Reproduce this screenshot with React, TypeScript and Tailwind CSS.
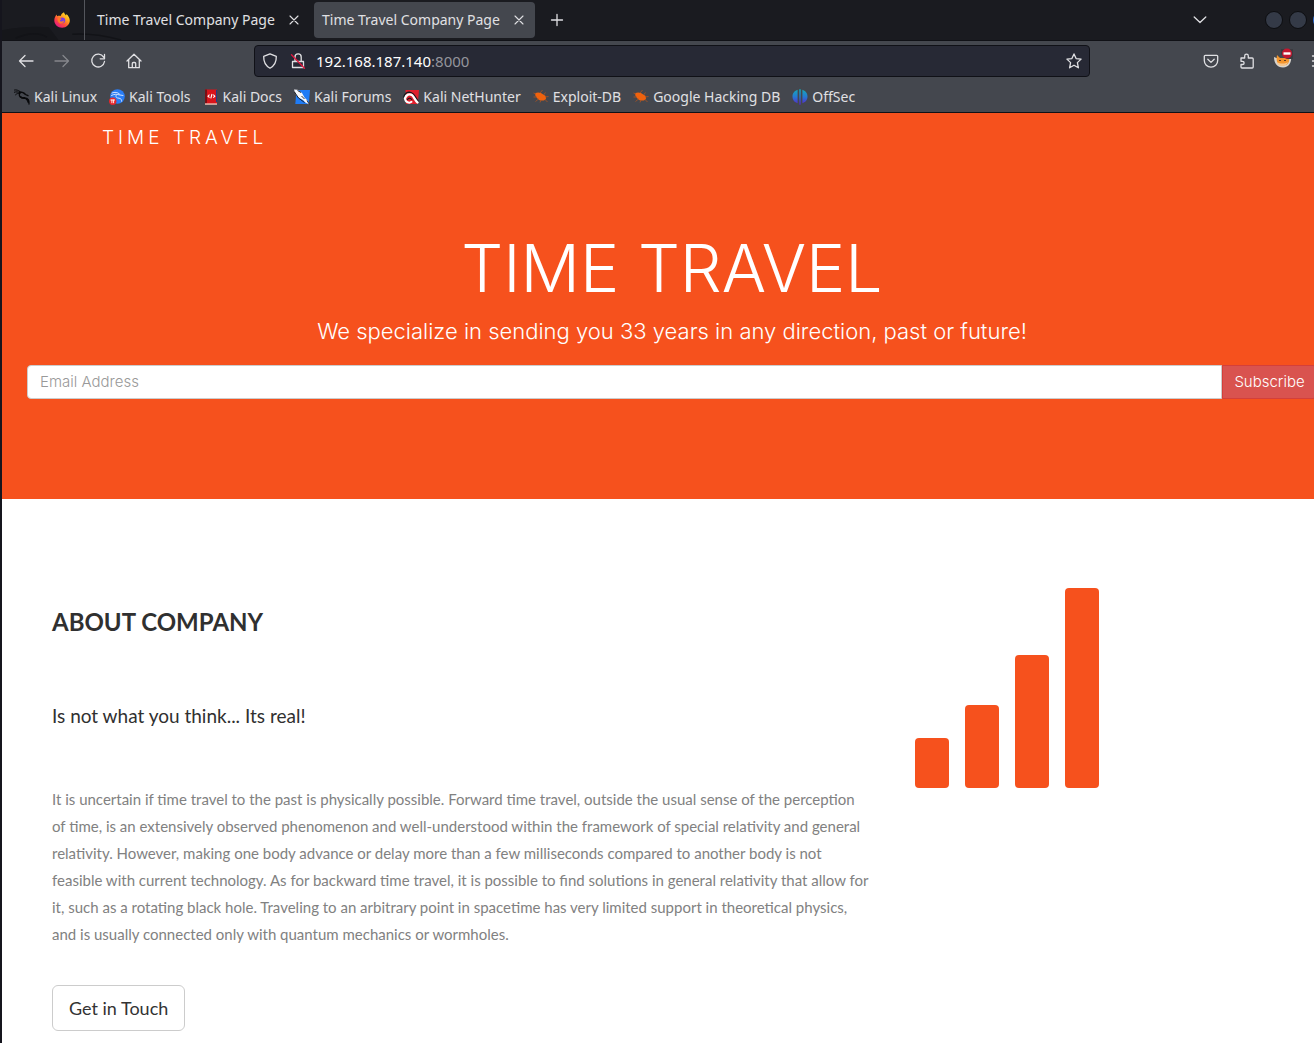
import type { ReactNode } from 'react';

const ui = "font-['Noto_Sans',sans-serif]";
const display = "font-[Inter,sans-serif]";

function Svg({ children, size = 'size-4', label }: { children: ReactNode; size?: string; label?: string }) {
  return (
    <svg
      viewBox="0 0 16 16"
      className={`${size} shrink-0`}
      fill="none"
      stroke="currentColor"
      strokeWidth="1.3"
      strokeLinecap="round"
      strokeLinejoin="round"
      role={label ? 'img' : undefined}
      aria-label={label}
      aria-hidden={label ? undefined : true}
    >
      {children}
    </svg>
  );
}

function CloseIcon() {
  return (
    <Svg>
      <path d="M4 4l8 8M12 4l-8 8" strokeWidth="1.1" />
    </Svg>
  );
}

function FirefoxLogo() {
  return (
    <svg viewBox="0 0 16 16" className="size-4 shrink-0" aria-hidden="true">
      <defs>
        <linearGradient id="fx" x1="0.85" y1="0.1" x2="0.2" y2="0.95">
          <stop offset="0" stopColor="#ffe226" />
          <stop offset="0.35" stopColor="#ff9a1f" />
          <stop offset="0.65" stopColor="#ff4a3d" />
          <stop offset="1" stopColor="#e31587" />
        </linearGradient>
      </defs>
      <path
        d="M10 0.3c0.3 1.6 1.3 2.3 2 3.2 0.3-0.5 0.4-1 0.3-1.5 2 1.6 3.5 3.9 3.5 6.6 0 4-3.4 7.2-7.7 7.2S0.3 12.700 0.3 8.600c0-2.500 0.900-4.500 2.400-6.100 0 0.900 0.200 1.400 0.600 1.700 1.300-0.700 2.300-0.500 3.400-0.200C7.100 2.300 8.300 1 10 0.300z"
        fill="url(#fx)"
      />
      <circle cx="8.300" cy="8.300" r="2.900" fill="#7a3fe0" />
      <path d="M3.600 6.300c1.600-0.600 2.600 0.200 4 0.500-0.100 1-1.700 1-1.700 1.900 0.800 1.500 3 0.900 4.400-0.100-0.400 2.500-2.700 3.500-4.400 2.800C4.200 10.700 3.200 8.600 3.600 6.300z" fill="#ff7a28" />
    </svg>
  );
}

function KaliDragon() {
  return (
    <svg viewBox="0 0 16 16" className="size-4 shrink-0" fill="none" stroke="#08090b" strokeLinecap="round" aria-hidden="true">
      <path d="M0.500 1C2.500 0.600 4 1.200 6 2.500M0.300 3.200C2 2.600 4 2.800 6 3.700M1.500 5.800C2.500 4.600 4 4.200 6 4.500" strokeWidth="1" />
      <path d="M5.500 3c2 0 4.500 0.600 6 2.500l2.500 1.200M5.800 4C4.800 5.800 5.200 8.200 8 8.800c2.500 0.400 5-0.200 6.300 1.800 0.900 1.500 0.800 3 0.700 4.400" strokeWidth="1.300" />
      <path d="M6.500 7.800c1 1.300 2.500 1.200 4 1.200M12.500 10c1 0.700 1.600 1.800 1.800 3" strokeWidth="1.800" />
    </svg>
  );
}

function ToolsIcon() {
  return (
    <svg viewBox="0 0 16 16" className="size-4 shrink-0" fill="none" strokeLinecap="round" aria-hidden="true">
      <circle cx="8.500" cy="7.500" r="7.300" fill="#2a7df5" />
      <path d="M3 4c3-1.200 5.500-0.800 7.500 1M2.500 6.500c2.500-1.500 5-1.500 7.500-0.700l4 0.700M7 6.500c-0.500 2 1 2.500 3 2.700 2 0.200 2.800 1.500 2.600 3" stroke="#cfe2ff" strokeWidth="1" />
      <circle cx="3.700" cy="12.200" r="3.700" fill="#e5262b" />
      <path d="M1.800 11h3.800M2.900 11v2.800M4.600 11v2.800" stroke="#fff" strokeWidth="0.900" />
    </svg>
  );
}

function DocsIcon() {
  return (
    <svg viewBox="0 0 16 16" className="size-4 shrink-0" aria-hidden="true">
      <path d="M2 0.500h12v14.500H2z" fill="#d8141b" />
      <path d="M2 0.500h2v14H2z" fill="#7a1015" />
      <path d="M13 1h1v12h-1z" fill="#263a86" />
      <path d="M2 14.300h12v1.500H2z" fill="#e8b9ae" />
      <path d="M6.500 5.700L5 7.200l1.500 1.500M10.300 5.700l1.500 1.500-1.500 1.500M9 5L7.800 9.400" fill="none" stroke="#fff" strokeWidth="1.100" />
    </svg>
  );
}

function ForumsIcon() {
  return (
    <svg viewBox="0 0 16 16" className="size-4 shrink-0" aria-hidden="true">
      <path d="M2.500 1H16l-1.200 14H1.300z" fill="#1f7cf6" />
      <path d="M0 0.500l3.500 0.300L8 4l2.500 4.500L13 11l2.500 4.500-4-2-2.500-2.500L4.500 8.500 1.500 5z" fill="#f6f8fb" />
      <path d="M0.500 3L4.500 9l6 4.500M3.500 1.500l3.500 2M7.500 7l3 3M13 11.500l2.500 4" fill="none" stroke="#16181c" strokeWidth="0.900" />
    </svg>
  );
}

function NetHunterIcon() {
  return (
    <svg viewBox="0 0 16 16" className="size-4 shrink-0" fill="none" strokeLinecap="round" aria-hidden="true">
      <path d="M2.500 1H16l-1.200 14H3z" fill="#df1f2c" />
      <path d="M0.800 8C1.500 4.500 4.500 2.500 8 3.500c3.500 1 4.500 5 7 8.500" stroke="#16181c" strokeWidth="1.300" />
      <path d="M2 9.500C3 5.500 6.500 4.300 9 6.200c2 1.600 3 4.800 5.500 7.300" stroke="#fff" strokeWidth="2.300" />
      <path d="M2 9.500c0.300 4 4.500 5 6.500 3.300" stroke="#fff" strokeWidth="2" />
      <path d="M4.500 10.500c1-1.800 3-1.800 4.200 0" stroke="#16181c" strokeWidth="1.200" />
    </svg>
  );
}

function BugIcon() {
  return (
    <svg viewBox="0 0 16 16" className="size-4 shrink-0" aria-hidden="true">
      <path d="M2.500 4C5 2.800 8 3.500 10.500 5.800c1.500 0.300 2.500 1.500 2.600 3.400l-0.800 1.500C9.500 12.500 5.500 11.500 4 9 2.500 7.500 1.600 5.700 2.500 4z" fill="#f0620e" />
      <path d="M7 4l2.500-3M10.500 6l2-2.500M12 8l3.500-0.500M4 8L0.500 8M5.500 10l-3 2.500M8 11l-1 2.500M12 10.500l2.500 2.500M3 5L0.500 4" fill="none" stroke="#b0541f" strokeWidth="0.800" />
    </svg>
  );
}

function OffSecIcon() {
  return (
    <svg viewBox="0 0 16 16" className="size-4 shrink-0" aria-hidden="true">
      <defs>
        <linearGradient id="os" x1="0" y1="0" x2="0" y2="1">
          <stop offset="0" stopColor="#14a9b8" />
          <stop offset="0.500" stopColor="#2777d2" />
          <stop offset="1" stopColor="#5b22c9" />
        </linearGradient>
      </defs>
      <path
        d="M5.600 0.700v13.500C2.800 13.500 0.500 11 0.500 7.500S2.800 1.500 5.600 0.700zM7.200 0.300h1.600L8.600 15.700H7.400zM10.400 0.700c2.800 0.800 5.100 3.300 5.100 6.800s-2.300 6-5.100 6.700z"
        fill="url(#os)"
      />
    </svg>
  );
}

function FoxIcon() {
  return (
    <svg viewBox="0 0 20 20" className="size-5 shrink-0" aria-hidden="true">
      <path d="M1 9l5 2h8l4-3c1 6-2 11.500-8 11.500S1 15 1 9z" fill="#d8d4cd" />
      <path d="M4 7l3 3h6l3-1c1 5-1 8.500-6.500 8.500S3 13 4 7z" fill="#f3952c" />
      <path d="M4 14c3 2 8 2 11 0-1 2.500-3 4-6 4s-4-1.500-5-4z" fill="#f6c68e" />
      <path d="M6 12.500h2M11 12.500h2" stroke="#5c3b23" />
      <path d="M8 1h12v10h-6l-2-1-2-2-2-2z" fill="#3a3b40" />
      <circle cx="14" cy="5.500" r="5" fill="#c4162f" />
      <path d="M10.500 4.300h7v2.400h-7z" fill="#fff" />
    </svg>
  );
}

const bookmarks: { name: string; icon: ReactNode }[] = [
  { name: 'Kali Linux', icon: <KaliDragon /> },
  { name: 'Kali Tools', icon: <ToolsIcon /> },
  { name: 'Kali Docs', icon: <DocsIcon /> },
  { name: 'Kali Forums', icon: <ForumsIcon /> },
  { name: 'Kali NetHunter', icon: <NetHunterIcon /> },
  { name: 'Exploit-DB', icon: <BugIcon /> },
  { name: 'Google Hacking DB', icon: <BugIcon /> },
  { name: 'OffSec', icon: <OffSecIcon /> },
];

function TabStrip() {
  return (
    <div className="relative flex h-[41px] items-center overflow-hidden border-b border-[#101116] bg-[#1a1b20]">
      <svg viewBox="0 0 130 41" className="absolute left-0 top-0 h-full" fill="none" aria-hidden="true">
        <path d="M0 31C20 27 38 27 48 28L58 41H0z" fill="#15161a" />
        <path d="M14 39C26 34 38 33 46 38M72 35c18-1 36 2 50 6" stroke="#121317" strokeWidth="1.500" />
      </svg>
      <button aria-label="Firefox" className="relative flex h-full w-[83px] items-center justify-end border-r border-[#54565c] pr-[14px]">
        <FirefoxLogo />
      </button>
      <div className="relative flex h-full items-center gap-3 pl-3 pr-3">
        <button className="w-[177px] whitespace-nowrap text-left">Time Travel Company Page</button>
        <button aria-label="Close first tab"><CloseIcon /></button>
      </div>
      <div className="flex h-9 items-center gap-3 rounded bg-[#44474e] px-2">
        <button className="w-[177px] whitespace-nowrap text-left">Time Travel Company Page</button>
        <button aria-label="Close current tab"><CloseIcon /></button>
      </div>
      <button aria-label="New tab" className="ml-[14px]">
        <Svg><path d="M8 2.500v11M2.500 8h11" /></Svg>
      </button>
      <button aria-label="List all tabs" className="ml-auto">
        <Svg><path d="M2.200 5L8 10.500 13.800 5" /></Svg>
      </button>
      <div className="ml-[57px] mr-[11px] flex gap-[6px]">
        <button aria-label="Minimize" className="size-[18px] rounded-full border border-[#0c0d10] bg-[#343a47]" />
        <button aria-label="Maximize" className="size-[18px] rounded-full border border-[#0c0d10] bg-[#343a47]" />
        <button aria-label="Close window" className="size-[18px] rounded-full bg-[#2f6fd8]" />
      </div>
    </div>
  );
}

function Toolbar() {
  return (
    <div className="grid h-10 grid-cols-[252px_1fr_252px] items-center">
      <div className="flex gap-5 pl-4">
        <button aria-label="Back"><Svg><path d="M15 8H1.500M7 2.500L1.500 8 7 13.500" /></Svg></button>
        <button aria-label="Forward" className="text-[#85878c]"><Svg><path d="M1 8h13.500M9 2.500L14.500 8 9 13.500" /></Svg></button>
        <button aria-label="Reload"><Svg><path d="M13.600 4.200A6.400 6.400 0 1 0 14.500 8.500M14.500 1.500v4.300h-4.300" /></Svg></button>
        <button aria-label="Home"><Svg><path d="M1 8L8 1.300 15 8M2.700 6.800v7.900h10.600V6.800M6.300 14.500V10.500a1 1 0 0 1 1-1h1.400a1 1 0 0 1 1 1v4" /></Svg></button>
      </div>
      <div className="flex h-8 items-center rounded border border-[#101117] bg-[#272935] px-[7px]">
        <Svg label="Tracking protection"><path d="M8 0.800l6.300 2.500C14.500 8.500 12.500 12.800 8 15.200 3.500 12.800 1.500 8.500 1.700 3.300z" /></Svg>
        <span className="ml-3">
          <Svg label="Connection not secure">
            <path d="M2.500 8.500h11v6h-11zM5 8.200V4a3 3 0 0 1 6.200 0v4.200" />
            <path d="M1.500 1.800l13 13.500" stroke="#e2173f" />
          </Svg>
        </span>
        <div className="ml-[10px] grow whitespace-nowrap text-[15px] text-white" role="textbox" aria-label="Address" tabIndex={0}>
          192.168.187.140<span className="text-[#94959c]">:8000</span>
        </div>
        <button aria-label="Bookmark this page">
          <Svg><path d="M8 0.900l2.100 4.700 5 0.500-3.700 3.500 1 5.200L8 12.200l-4.400 2.600 1-5.200L0.900 6.100l5-0.500z" /></Svg>
        </button>
      </div>
      <div className="flex items-center justify-end gap-5 pr-[15px]">
        <button aria-label="Save to Pocket"><Svg><path d="M2.300 2.300h11.400a1 1 0 0 1 1 1V7.500a6.700 6.700 0 0 1-13.400 0V3.300a1 1 0 0 1 1-1zM4.800 6.300L8 9.400l3.200-3.100" /></Svg></button>
        <button aria-label="Extensions"><Svg><path d="M2 5h3.700V3a1.800 1.800 0 0 1 3.600 0v2h3.900a1 1 0 0 1 1 1v8a1 1 0 0 1-1 1H3a1 1 0 0 1-1-1v-2.500h1.500a1.600 1.600 0 0 0 0-3.200H2z" /></Svg></button>
        <button aria-label="FoxyProxy" className="-mx-[2px] mb-[6px]"><FoxIcon /></button>
        <button aria-label="Application menu"><Svg><path d="M1.500 3h13M1.500 8h13M1.500 13h13" /></Svg></button>
      </div>
    </div>
  );
}

function BrowserChrome() {
  return (
    <header className={`${ui} border-b border-[#101116] bg-[#44474e] text-[14px] leading-5 text-[#e0e0e3]`}>
      <TabStrip />
      <Toolbar />
      <nav aria-label="Bookmarks" className="flex h-[31px] items-center gap-3 pl-3">
        {bookmarks.map((b) => (
          <a key={b.name} href="#" className="flex items-center gap-1 whitespace-nowrap">
            {b.icon}
            {b.name}
          </a>
        ))}
      </nav>
    </header>
  );
}

function Hero() {
  return (
    <section className={`${display} bg-[#f6511d] px-[25px] pb-[100px] font-light text-white`}>
      <nav className="flex h-[50px] items-center pl-[75px]">
        <a href="#" className="text-[19px] leading-5 tracking-[4px]">TIME TRAVEL</a>
      </nav>
      <h1 className="pt-[70px] text-center text-[66px] leading-[70px]">TIME TRAVEL</h1>
      <p className="pb-[18px] pt-3 text-center text-[22px] leading-[32px]">
        We specialize in sending you 33 years in any direction, past or future!
      </p>
      <form className="flex h-[34px] text-[15px]" onSubmit={(e) => e.preventDefault()}>
        <input
          type="email"
          aria-label="Email Address"
          placeholder="Email Address"
          className="min-w-0 grow rounded-l border border-[#ccc] bg-white px-3 text-[#555] placeholder:text-[#999]"
        />
        <button type="submit" className="w-[95px] rounded-r border border-[#d43f3a] bg-[#d9534f]">Subscribe</button>
      </form>
    </section>
  );
}

const bars = [
  { x: 16, height: 50 },
  { x: 66, height: 83 },
  { x: 116, height: 133 },
  { x: 166, height: 200 },
];

function About() {
  return (
    <section className="grid grid-cols-3 gap-[30px] bg-white px-[50px] py-[89px] font-[Lato,sans-serif]">
      <div className="col-span-2">
        <h2 className="pt-4 text-[24px] font-bold leading-9 text-[#303030]">ABOUT COMPANY</h2>
        <h4 className="pt-[62px] text-[19px] leading-[27px] text-[#303030]">Is not what you think... Its real!</h4>
        <p className="pt-[57px] text-[15px] leading-[27px] text-[#818181]">
          It is uncertain if time travel to the past is physically possible. Forward time travel, outside the usual sense of the
          perception of time, is an extensively observed phenomenon and well-understood within the framework of special relativity
          and general relativity. However, making one body advance or delay more than a few milliseconds compared to another body
          is not feasible with current technology. As for backward time travel, it is possible to find solutions in general
          relativity that allow for it, such as a rotating black hole. Traveling to an arbitrary point in spacetime has very
          limited support in theoretical physics, and is usually connected only with quantum mechanics or wormholes.
        </p>
        <button className="mt-[37px] h-[46px] rounded-md border border-[#ccc] px-4 text-[18px] leading-6 text-[#333]">Get in Touch</button>
      </div>
      <svg viewBox="0 0 200 200" className="size-[200px]" fill="#f6511d" role="img" aria-label="Growing signal bars">
        {bars.map((bar) => (
          <rect key={bar.x} x={bar.x} y={200 - bar.height} width="34" height={bar.height} rx="4" />
        ))}
      </svg>
    </section>
  );
}

export default function App() {
  return (
    <div className="h-screen overflow-hidden border-l-2 border-[#15151d] bg-white">
      <div className="-mr-7">
        <BrowserChrome />
        <main>
          <Hero />
          <About />
        </main>
      </div>
    </div>
  );
}
